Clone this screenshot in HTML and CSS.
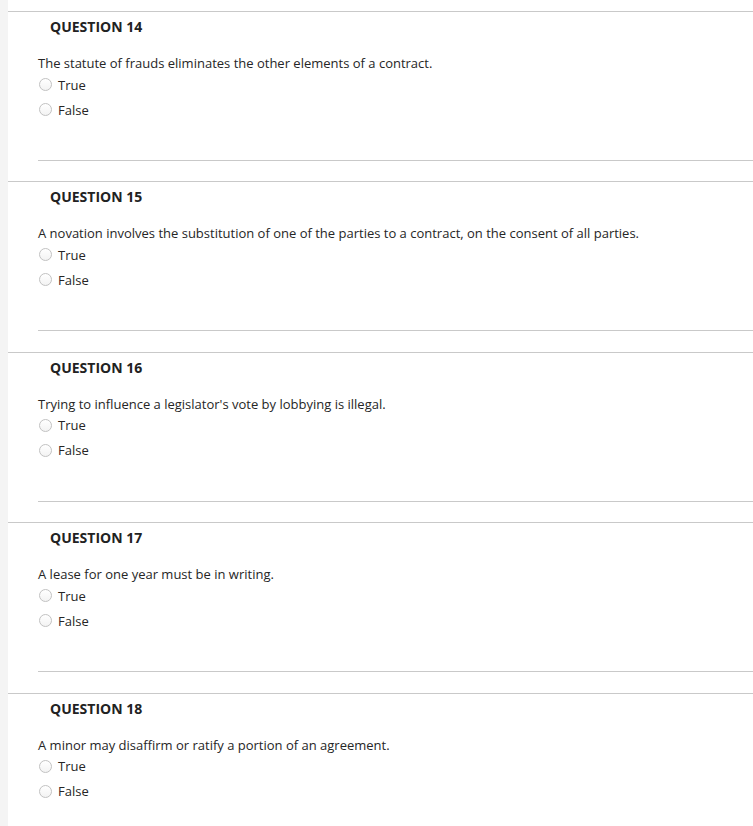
FILE: index.html
```html
<!DOCTYPE html>
<html>
<head>
<meta charset="utf-8">
<link rel="stylesheet" href="styles.css">
</head>
<body>
<div class="page">
  <div class="strip"></div>
  <main class="main">
    <section class="question">
      <h3 class="q-title">QUESTION 14</h3>
      <p class="q-text">The statute of frauds eliminates the other elements of a contract.</p>
      <label class="option"><span class="radio"></span>True</label>
      <label class="option"><span class="radio"></span>False</label>
      <div class="divider"></div>
    </section>
    <section class="question">
      <h3 class="q-title">QUESTION 15</h3>
      <p class="q-text">A novation involves the substitution of one of the parties to a contract, on the consent of all parties.</p>
      <label class="option"><span class="radio"></span>True</label>
      <label class="option"><span class="radio"></span>False</label>
      <div class="divider"></div>
    </section>
    <section class="question">
      <h3 class="q-title">QUESTION 16</h3>
      <p class="q-text">Trying to influence a legislator's vote by lobbying is illegal.</p>
      <label class="option"><span class="radio"></span>True</label>
      <label class="option"><span class="radio"></span>False</label>
      <div class="divider"></div>
    </section>
    <section class="question">
      <h3 class="q-title">QUESTION 17</h3>
      <p class="q-text">A lease for one year must be in writing.</p>
      <label class="option"><span class="radio"></span>True</label>
      <label class="option"><span class="radio"></span>False</label>
      <div class="divider"></div>
    </section>
    <section class="question">
      <h3 class="q-title">QUESTION 18</h3>
      <p class="q-text">A minor may disaffirm or ratify a portion of an agreement.</p>
      <label class="option"><span class="radio"></span>True</label>
      <label class="option"><span class="radio"></span>False</label>
    </section>
  </main>
</div>
</body>
</html>
```

FILE: styles.css
```css
html, body {
  margin: 0;
  padding: 0;
  background: #ffffff;
  font-family: "Open Sans", "Noto Sans", sans-serif;
  color: #2b2b2b;
  height: 826px;
  overflow: hidden;
}

.page {
  display: flex;
  min-height: 826px;
}

.strip {
  width: 8px;
  flex: 0 0 8px;
  background: #f4f4f4;
}

.main {
  flex: 1;
  padding-top: 11px;
}

.question {
  border-top: 1px solid #c9c9c9;
  padding-top: 5px;
  padding-bottom: 20.4px;
}

.q-title {
  margin: 0;
  padding-left: 42px;
  font-size: 14px;
  line-height: 20px;
  font-weight: 700;
  color: #222222;
  letter-spacing: 0;
}

.q-text {
  margin: 17px 0 0 30px;
  font-size: 13px;
  line-height: 18px;
  color: #262626;
}

.option {
  display: flex;
  align-items: center;
  height: 25px;
  margin-left: 31px;
  font-size: 13px;
  color: #262626;
}

.radio {
  width: 11px;
  height: 11px;
  border: 1px solid #c2c2c2;
  border-radius: 50%;
  background: linear-gradient(#ffffff, #f3f3f3);
  margin-right: 6px;
  box-sizing: content-box;
}

.divider {
  margin: 38px 0 0 30px;
  border-top: 1px solid #c9c9c9;
}
```
